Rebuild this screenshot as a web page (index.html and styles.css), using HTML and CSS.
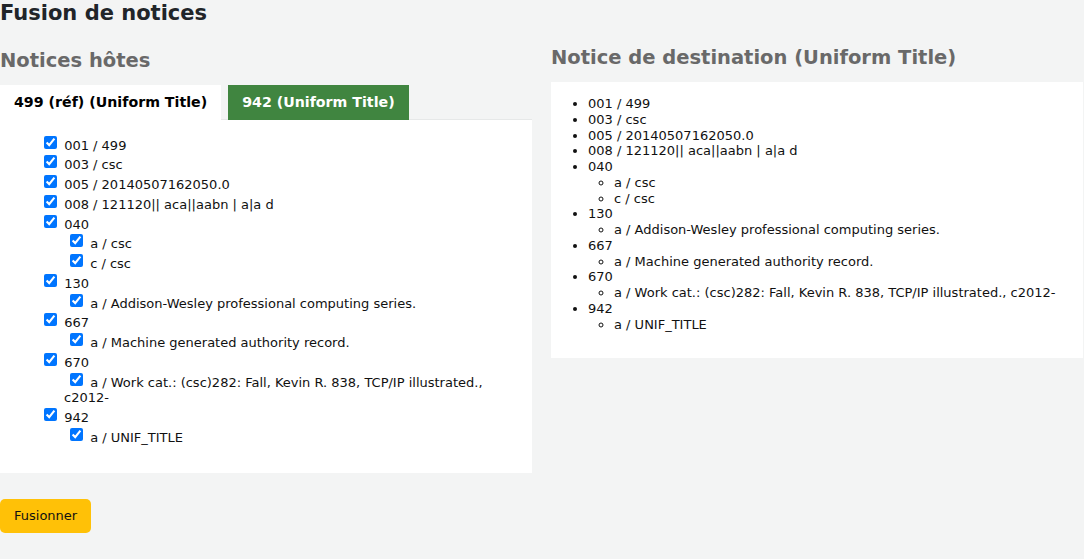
FILE: index.html
```html
<!DOCTYPE html>
<html lang="fr">
<head>
    <meta charset="UTF-8">
    <meta name="viewport" content="width=device-width, initial-scale=1.0">
    <title>Fusion de notices</title>
    <link rel="stylesheet" href="styles.css">
</head>
<body>
    <h1>Fusion de notices</h1>

    <div class="merge-grid">
        <!-- notices sources -->
        <div class="merge-col">
            <h2 class="host-title">Notices hôtes</h2>
            <div class="tabs">
                <span class="tab active">499 (réf) (Uniform Title)</span>
                <span class="tab">942 (Uniform Title)</span>
            </div>
            <div class="tab-panel">
                <ul class="field-list">
                    <li><input type="checkbox" checked> 001 / 499</li>
                    <li><input type="checkbox" checked> 003 / csc</li>
                    <li><input type="checkbox" checked> 005 / 20140507162050.0</li>
                    <li><input type="checkbox" checked> 008 / 121120|| aca||aabn | a|a d</li>
                    <li><input type="checkbox" checked> 040
                        <ul class="subfield-list">
                            <li><input type="checkbox" checked> a / csc</li>
                            <li><input type="checkbox" checked> c / csc</li>
                        </ul>
                    </li>
                    <li><input type="checkbox" checked> 130
                        <ul class="subfield-list">
                            <li><input type="checkbox" checked> a / Addison-Wesley professional computing series.</li>
                        </ul>
                    </li>
                    <li><input type="checkbox" checked> 667
                        <ul class="subfield-list">
                            <li><input type="checkbox" checked> a / Machine generated authority record.</li>
                        </ul>
                    </li>
                    <li><input type="checkbox" checked> 670
                        <ul class="subfield-list">
                            <li><input type="checkbox" checked> a / Work cat.: (csc)282: Fall, Kevin R. 838, TCP/IP illustrated., c2012-</li>
                        </ul>
                    </li>
                    <li><input type="checkbox" checked> 942
                        <ul class="subfield-list">
                            <li><input type="checkbox" checked> a / UNIF_TITLE</li>
                        </ul>
                    </li>
                </ul>
            </div>
        </div>

        <!-- notice resultat -->
        <div class="merge-col">
            <h2 class="dest-title">Notice de destination (Uniform Title)</h2>
            <div class="result-panel">
                <ul class="result-list">
                    <li>001 / 499</li>
                    <li>003 / csc</li>
                    <li>005 / 20140507162050.0</li>
                    <li>008 / 121120|| aca||aabn | a|a d</li>
                    <li>040
                        <ul>
                            <li>a / csc</li>
                            <li>c / csc</li>
                        </ul>
                    </li>
                    <li>130
                        <ul>
                            <li>a / Addison-Wesley professional computing series.</li>
                        </ul>
                    </li>
                    <li>667
                        <ul>
                            <li>a / Machine generated authority record.</li>
                        </ul>
                    </li>
                    <li>670
                        <ul>
                            <li>a / Work cat.: (csc)282: Fall, Kevin R. 838, TCP/IP illustrated., c2012-</li>
                        </ul>
                    </li>
                    <li>942
                        <ul>
                            <li>a / UNIF_TITLE</li>
                        </ul>
                    </li>
                </ul>
            </div>
        </div>
    </div>

    <button class="merge-button">Fusionner</button>
</body>
</html>
```

FILE: styles.css
```css
body {
    margin: 0;
    background-color: #f3f4f4;
    font-family: "DejaVu Sans", sans-serif;
    font-size: 13px;
    color: #111;
}

h1 {
    margin: 0;
    font-size: 21px;
    line-height: 26px;
    color: #212529;
}

h2 {
    margin: 0;
    font-size: 19.5px;
    line-height: 24px;
    color: #696969;
}

.merge-grid {
    display: grid;
    grid-template-columns: 532px 532px;
    column-gap: 19px;
    align-items: start;
}

.host-title {
    margin: 23px 0 12px;
}

.dest-title {
    margin: 20px 0 12px;
}

/* onglets */
.tabs {
    display: flex;
    gap: 7px;
    border-bottom: 1px solid #e6e8e8;
}

.tab {
    height: 35px;
    margin-bottom: -1px;
    padding: 0 14px;
    line-height: 34px;
    font-size: 14.2px;
    font-weight: bold;
    background-color: #408540;
    color: white;
}

    .tab.active {
        background-color: white;
        color: #000;
    }

.tab-panel {
    background-color: white;
    padding: 13.5px 22px 27px 0;
}

.field-list,
.subfield-list {
    list-style: none;
    margin: 0;
    line-height: 15.75px;
}

.field-list {
    padding-left: 40px;
}

.subfield-list {
    padding-left: 24px;
}

.field-list input {
    width: 13px;
    height: 13px;
    margin: 2px 3px 3px 4px;
    vertical-align: 1px;
}

.subfield-list input {
    margin-left: 6px;
}

/* notice de destination */
.result-panel {
    background-color: white;
    padding: 14px 0 26px;
}

.result-list {
    margin: 0;
    padding-left: 37px;
    line-height: 15.75px;
}

    .result-list ul {
        margin: 0;
        padding-left: 26px;
    }

.merge-button {
    margin-top: 26px;
    height: 34px;
    padding: 0 14px;
    font-family: "DejaVu Sans", sans-serif;
    font-size: 13px;
    color: #111;
    background-color: #ffc107;
    border: none;
    border-radius: 5px;
    cursor: pointer;
}
```
